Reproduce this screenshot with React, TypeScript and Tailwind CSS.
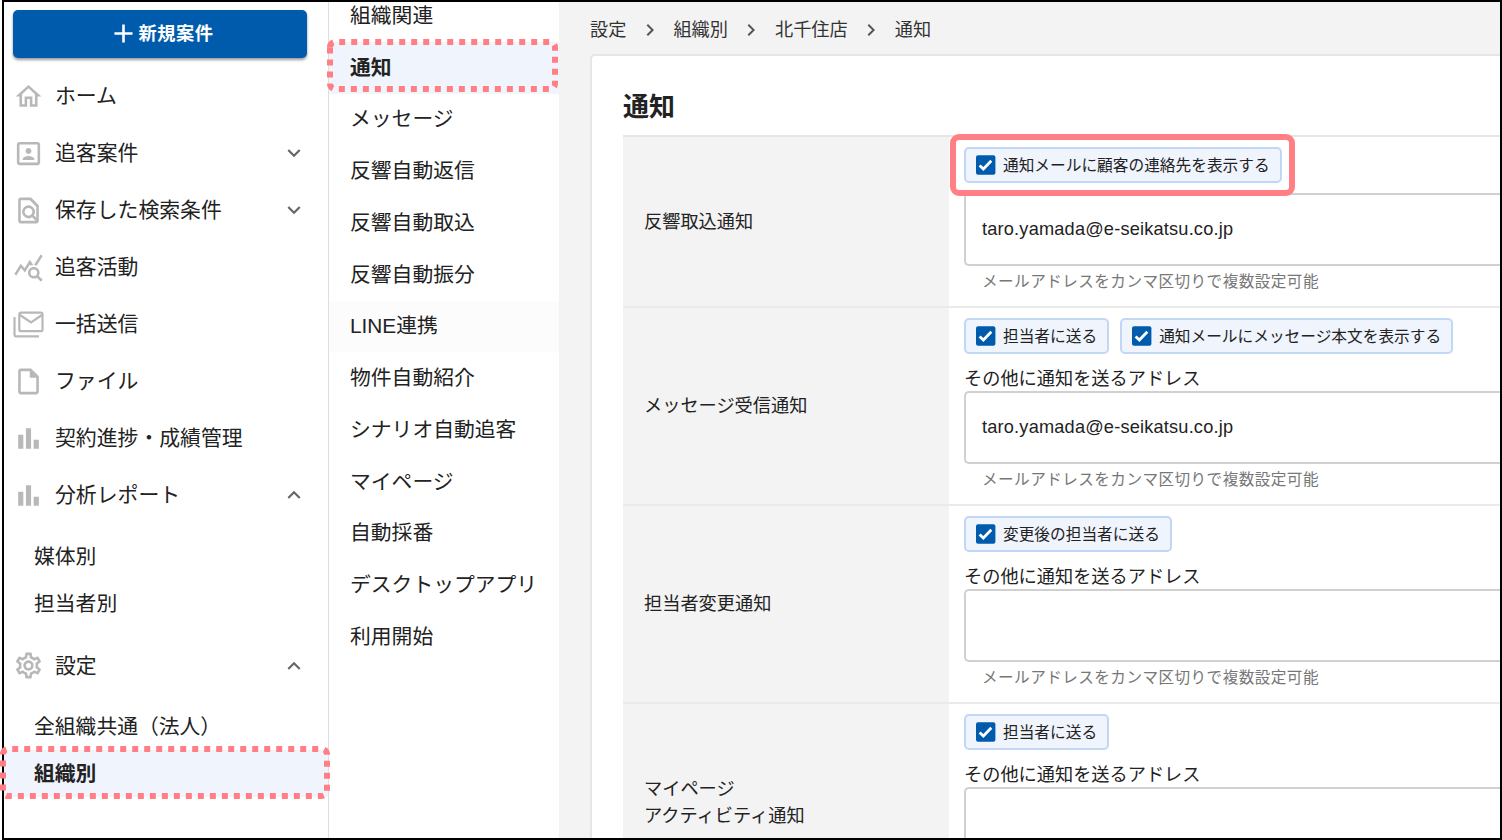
import type { ReactNode } from "react";
import {
  MdAdd,
  MdExpandLess,
  MdExpandMore,
  MdNavigateNext,
  MdOutlineFindInPage,
  MdOutlineHome,
  MdOutlineInsertDriveFile,
  MdOutlineSettings,
  MdPortrait,
  MdQueryStats,
} from "react-icons/md";

const ICON = "mt-px size-[31px] shrink-0 text-[#b8b8b8]";

function BarsIcon() {
  return (
    <svg viewBox="0 0 24 24" className={ICON} fill="currentColor">
      <path d="M4 9h4v11H4zm12 4h4v7h-4zm-6-9h4v16h-4z" />
    </svg>
  );
}

function MailStackIcon() {
  return (
    <svg viewBox="0 0 31 31" className={ICON} fill="none" stroke="currentColor" strokeWidth="2.2">
      <rect x="6.3" y="3.6" width="23.2" height="18.6" rx="1.8" />
      <path d="M7 6l11 7.5L29 6" />
      <path d="M1.5 8v17.4q0 2 2 2H26" />
    </svg>
  );
}

function NavItem({ icon, label, open }: { icon: ReactNode; label: string; open?: boolean }) {
  return (
    <div className="flex h-[57px] items-center pl-[9px] pr-[21px]">
      {icon}
      <span className="-mt-[3px] ml-[11px] flex-1 text-[20.85px] leading-[30px]">{label}</span>
      {open === true && <MdExpandLess className="mt-px size-[26px] text-[#666]" />}
      {open === false && <MdExpandMore className="mt-px size-[26px] text-[#666]" />}
    </div>
  );
}

function SubItem({ label, active }: { label: string; active?: boolean }) {
  return (
    <div
      className={
        active
          ? "flex h-[46.8px] items-center bg-[#f0f5fd] pb-[2px] pl-[30px] text-[20.8px] font-bold"
          : "flex h-[46.8px] items-center pb-[2px] pl-[30px] text-[20.8px]"
      }
    >
      {label}
    </div>
  );
}

function Chip({ label }: { label: string }) {
  return (
    <div className="flex h-[36px] items-center rounded-[5px] border-2 border-[#c2d6f5] bg-[#eff4fd] pl-[10px] pr-[10px]">
      <svg viewBox="0 0 20 20" className="size-5 shrink-0">
        <rect x="0" y="0.2" width="19.4" height="19.6" rx="2" fill="#005bac" />
        <path d="M3.6 10.4l3.8 3.6 7.9-8.2" fill="none" stroke="#fff" strokeWidth="2.8" />
      </svg>
      <span className="ml-[7px] whitespace-nowrap text-[15.7px] leading-6">{label}</span>
    </div>
  );
}

interface RowData {
  title: string[];
  chips: string[];
  other: boolean;
  value: string;
  hint: string;
}

const MAIL = "taro.yamada@e-seikatsu.co.jp";
const HINT = "メールアドレスをカンマ区切りで複数設定可能";

const rows: RowData[] = [
  {
    title: ["反響取込通知"],
    chips: ["通知メールに顧客の連絡先を表示する"],
    other: false,
    value: MAIL,
    hint: HINT,
  },
  {
    title: ["メッセージ受信通知"],
    chips: ["担当者に送る", "通知メールにメッセージ本文を表示する"],
    other: true,
    value: MAIL,
    hint: HINT,
  },
  { title: ["担当者変更通知"], chips: ["変更後の担当者に送る"], other: true, value: "", hint: HINT },
  {
    title: ["マイページ", "アクティビティ通知"],
    chips: ["担当者に送る"],
    other: true,
    value: "",
    hint: "",
  },
];

function Row({ row }: { row: RowData }) {
  return (
    <div
      className={
        row.other
          ? "flex h-[198px] shrink-0 border-t-2 border-[#eaeaea]"
          : "flex h-[171px] shrink-0 border-t-2 border-[#e6e6e6]"
      }
    >
      <div
        className={
          row.title.length > 1
            ? "flex w-[326px] shrink-0 flex-col bg-[#f3f3f3] pl-[21px] pt-[70px] text-[18.2px] leading-[27.3px]"
            : "flex w-[326px] shrink-0 flex-col justify-center bg-[#f3f3f3] pb-[2px] pl-[21px] text-[18.2px] leading-[27.3px]"
        }
      >
        {row.title.map((t) => (
          <span key={t}>{t}</span>
        ))}
      </div>
      <div className="flex min-w-0 flex-1 flex-col pl-[15px] pt-[10px]">
        <div className="flex gap-[11px]">
          {row.chips.map((c) => (
            <Chip key={c} label={c} />
          ))}
        </div>
        {row.other ? (
          <div className="mt-[10px] h-[27px] text-[18.2px] leading-[27px]">その他に通知を送るアドレス</div>
        ) : (
          <div className="h-[10px]" />
        )}
        <div className="flex h-[73px] shrink-0 items-center rounded-l-[5px] border-y-2 border-l-2 border-[#d0d0d0] pl-[16px] font-['Liberation_Sans',sans-serif] text-[18.2px] tracking-[0.19px]">
          {row.value}
        </div>
        {row.hint && (
          <div className="mt-[2px] pl-[18px] text-[15.6px] leading-[24px] tracking-[0.45px] text-[#777]">
            {row.hint}
          </div>
        )}
      </div>
    </div>
  );
}

const menu = [
  "組織関連",
  "通知",
  "メッセージ",
  "反響自動返信",
  "反響自動取込",
  "反響自動振分",
  "LINE連携",
  "物件自動紹介",
  "シナリオ自動追客",
  "マイページ",
  "自動採番",
  "デスクトップアプリ",
  "利用開始",
];

const crumbs = ["設定", "組織別", "北千住店", "通知"];

export default function App() {
  return (
    <div className="relative h-[840px] w-[1502px] overflow-hidden bg-white pl-[2px] font-['Noto_Sans_CJK_JP',sans-serif] text-[#222]">
      <div className="flex h-[840px] overflow-hidden border-2 border-black">
        <nav className="flex w-[325px] shrink-0 flex-col border-r border-[#dedede]">
          <button className="ml-[9px] mt-[8px] flex h-[48px] w-[294px] shrink-0 items-center justify-center rounded-[5px] bg-[#005bac] pl-px text-[18.2px] font-bold tracking-[0.5px] text-white shadow-[0_2px_3px_rgba(0,0,0,0.4)]">
            <MdAdd className="-mt-[2px] size-[31px]" />
            <span className="-mt-[4px] leading-7">新規案件</span>
          </button>
          <div className="h-[9px] shrink-0" />
          <NavItem icon={<MdOutlineHome className={ICON} />} label="ホーム" />
          <NavItem icon={<MdPortrait className={ICON} />} label="追客案件" open={false} />
          <NavItem icon={<MdOutlineFindInPage className={ICON} />} label="保存した検索条件" open={false} />
          <NavItem icon={<MdQueryStats className={ICON} />} label="追客活動" />
          <NavItem icon={<MailStackIcon />} label="一括送信" />
          <NavItem icon={<MdOutlineInsertDriveFile className={ICON} />} label="ファイル" />
          <NavItem icon={<BarsIcon />} label="契約進捗・成績管理" />
          <NavItem icon={<BarsIcon />} label="分析レポート" open />
          <div className="py-[10px]">
            <SubItem label="媒体別" />
            <SubItem label="担当者別" />
          </div>
          <NavItem icon={<MdOutlineSettings className={ICON} />} label="設定" open />
          <div className="py-[10px]">
            <SubItem label="全組織共通（法人）" />
            <SubItem label="組織別" active />
          </div>
        </nav>

        <div className="w-[230px] shrink-0">
          <div className="-mt-[12px] flex flex-col">
            {menu.map((m) => (
              <div
                key={m}
                className={
                  m === "通知"
                    ? "flex h-[51.75px] items-center bg-[#f0f5fd] pb-[3px] pl-[21px] text-[20.8px] font-bold"
                    : m === "LINE連携"
                      ? "flex h-[51.75px] items-center bg-[#fcfcfc] pb-px pl-[21px] font-['Liberation_Sans','Noto_Sans_CJK_JP',sans-serif] text-[20.8px]"
                      : "flex h-[51.75px] items-center pb-[3px] pl-[21px] text-[20.8px]"
                }
              >
                {m}
              </div>
            ))}
          </div>
        </div>

        <main className="flex min-w-0 flex-1 flex-col bg-[#f3f3f3] pl-[31px]">
          <div className="flex h-[52px] shrink-0 items-center pt-[2px] text-[18.2px] text-[#333]">
            {crumbs.map((c, i) => (
              <div key={c} className="flex items-center">
                {i > 0 && <MdNavigateNext className="mx-[11.5px] mt-[2px] size-[24px] text-[#555]" />}
                <span>{c}</span>
              </div>
            ))}
          </div>
          <section className="flex h-[790px] shrink-0 flex-col rounded-tl-[5px] border-l-2 border-t-2 border-[#e6e6e6] bg-white pl-[31px]">
            <h1 className="h-[79px] shrink-0 pt-[29px] text-[26px] font-bold leading-[39px]">通知</h1>
            {rows.map((r) => (
              <Row key={r.title[0]} row={r} />
            ))}
          </section>
        </main>
      </div>

      <svg className="pointer-events-none absolute left-0 top-0" width="1502" height="840" fill="none" stroke="#ff7f84" strokeWidth="6">
        <path
          strokeDasharray="6 6"
          d="M330 47.25a5.25 5.25 0 0 1 5.25-5.25H549.75a5.25 5.25 0 0 1 5.25 5.25V83.75a5.25 5.25 0 0 1-5.25 5.25H335.25a5.25 5.25 0 0 1-5.25-5.25z"
        />
        <path
          strokeDasharray="6 6"
          d="M3 754.25a5.25 5.25 0 0 1 5.25-5.25H321.75a5.25 5.25 0 0 1 5.25 5.25V790.75a5.25 5.25 0 0 1-5.25 5.25H8.25a5.25 5.25 0 0 1-5.25-5.25z"
        />
        <rect x="953" y="137" width="339" height="56" rx="6" />
      </svg>
    </div>
  );
}
